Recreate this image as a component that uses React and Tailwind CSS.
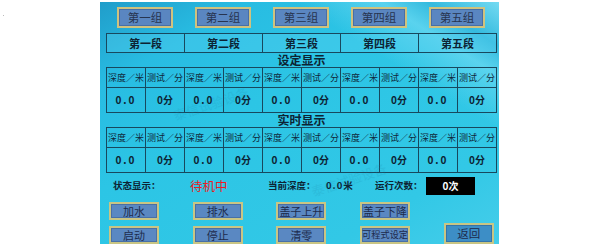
import React from "react";

const FONT = { fontFamily: '"Noto Sans CJK SC", "Noto Sans", sans-serif' };

function GroupBtn({ label }) {
  return (
    <div className="w-[56px] h-[21px] flex items-center justify-center bg-[#5a86c1] border-2 border-[#d0c27e] text-[11.5px] text-[#27344f] leading-none shadow-[inset_0_0_0_1px_rgba(40,70,120,0.35)]">
      {label}
    </div>
  );
}

function Btn({ label, tall, blue, small }) {
  return (
    <div
      className={
        "w-[50px] flex items-center justify-center border-2 border-[#c9c584] text-[#1d2b4c] leading-none whitespace-nowrap shadow-[inset_0_0_0_1px_rgba(40,70,120,0.35)] " +
        (tall ? "h-[21px] text-[11.5px] " : small ? "h-[18px] text-[9.2px] " : "h-[18px] text-[11px] ") +
        (blue ? "bg-[#3d8ec6]" : "bg-[#5a88c2]")
      }
    >
      {label}
    </div>
  );
}

function DataTable() {
  const cols = Array.from({ length: 10 });
  return (
    <div className="w-[391px] grid grid-cols-[repeat(10,39px)] border-l border-t border-[#18485e]">
      {cols.map((_, i) => (
        <div
          key={"h" + i}
          className="h-[20px] border-r border-b border-[#18485e] flex items-center justify-center text-[9px] text-[#10283a] leading-none whitespace-nowrap"
        >
          {i % 2 === 0 ? "深度／米" : "测试／分"}
        </div>
      ))}
      {cols.map((_, i) => (
        <div
          key={"d" + i}
          className="h-[25px] border-r border-b border-[#18485e] flex items-center justify-center text-[10px] font-bold text-[#0d2333] leading-none"
        >
          {i % 2 === 0 ? <span className="tracking-[2px]">0.0</span> : "0分"}
        </div>
      ))}
    </div>
  );
}

export default function App() {
  const groups = ["第一组", "第二组", "第三组", "第四组", "第五组"];
  const segs = ["第一段", "第二段", "第三段", "第四段", "第五段"];
  return (
    <div className="w-[600px] h-[244px] bg-white relative overflow-hidden" style={FONT}>
      <div className="absolute left-[3px] top-[15px] w-px h-px bg-[#bbbbbb]" />
      <div className="ml-[100px] mt-[2px] w-[399px] h-[242px] relative overflow-hidden pl-[6px] pt-[5px] flex flex-col bg-[linear-gradient(212deg,rgba(140,225,246,0.75)_0%,rgba(60,175,215,0.5)_9%,rgba(120,220,244,0.6)_15%,rgba(120,220,244,0)_26%),linear-gradient(150deg,#209dca_0%,#28bce2_18%,#2cc5e5_40%,#32c8e6_80%,#45cdea_100%)]">
        <span className="absolute left-[72px] top-[92px] -rotate-[18deg] text-[13px] text-[#1b7fa3] opacity-[0.15] whitespace-nowrap pointer-events-none">
          泰信试验设备
        </span>
        <span className="absolute left-[210px] top-[168px] -rotate-[18deg] text-[13px] text-[#1b7fa3] opacity-[0.15] whitespace-nowrap pointer-events-none">
          泰信试验设备
        </span>

        <div className="ml-[11px] flex gap-[22px]">
          {groups.map((g) => (
            <GroupBtn key={g} label={g} />
          ))}
        </div>

        <div className="mt-[5px] w-[391px] grid grid-cols-[repeat(5,78px)] border-l border-t border-[#18485e] bg-[rgba(90,210,240,0.35)]">
          {segs.map((s) => (
            <div
              key={s}
              className="h-[19px] border-r border-b border-[#18485e] flex items-center justify-center text-[11px] font-bold text-[#0d2333] leading-none"
            >
              {s}
            </div>
          ))}
        </div>

        <div className="w-[391px] h-[14px] flex items-center justify-center text-[12px] font-bold text-[#0d2333] leading-none">
          设定显示
        </div>
        <DataTable />
        <div className="w-[391px] h-[14px] flex items-center justify-center text-[12px] font-bold text-[#0d2333] leading-none">
          实时显示
        </div>
        <DataTable />

        <div className="mt-[4px] h-[18px] flex items-center text-[#0d2333] leading-none">
          <span className="ml-[7px] w-[77px] text-[9.5px] font-bold whitespace-nowrap">状态显示：</span>
          <span className="w-[78px] text-[12.5px] text-[#ec1c24] whitespace-nowrap">待机中</span>
          <span className="w-[58px] text-[9.5px] font-bold whitespace-nowrap">当前深度：</span>
          <span className="w-[49px] text-[9.5px] font-bold tracking-[1px] whitespace-nowrap">0.0米</span>
          <span className="w-[51px] text-[9.5px] font-bold whitespace-nowrap">运行次数：</span>
          <div className="w-[49px] h-[18px] bg-black text-white text-[10px] font-bold flex items-center justify-center">
            0次
          </div>
        </div>

        <div className="mt-[7px] ml-[3px] flex items-end gap-x-[33.7px]">
          <div className="flex flex-col gap-[6px]">
            <Btn label="加水" />
            <Btn label="启动" />
          </div>
          <div className="flex flex-col gap-[6px]">
            <Btn label="排水" />
            <Btn label="停止" />
          </div>
          <div className="flex flex-col gap-[6px]">
            <Btn label="盖子上升" />
            <Btn label="清零" />
          </div>
          <div className="flex flex-col gap-[6px]">
            <Btn label="盖子下降" />
            <Btn label="可程式设定" small />
          </div>
          <Btn label="返回" tall blue />
        </div>
      </div>
    </div>
  );
}
